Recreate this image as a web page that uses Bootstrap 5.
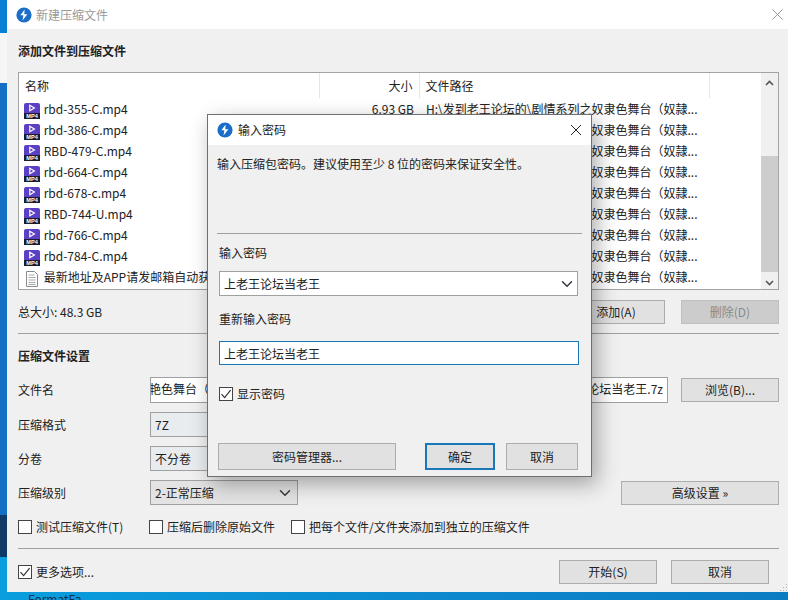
<!DOCTYPE html>
<html lang="zh"><head><meta charset="utf-8"><title>新建压缩文件</title>
<link href="https://cdn.jsdelivr.net/npm/bootstrap@5.3.0/dist/css/bootstrap.min.css" rel="stylesheet">
<style>
html,body{margin:0;height:600px;overflow:hidden}
body{font:12px/16px "Noto Sans CJK SC","Noto Sans",sans-serif;color:#222;background:#0d86cc}
.desk{width:788px;height:600px;overflow:hidden;position:relative}
.stripe{width:7px;height:592px;flex:none}
.s1{height:33px;background:#0a7fd6}.s2{height:50px;background:#f4f6f8}.s3{height:432px;background:#1470c4}.s4{height:42px;background:#0f3a66}.s5{height:35px;background:#0a9ede}
.deskfoot{height:8px;padding-left:28px;overflow:hidden;line-height:14px;font-size:12px;color:#12314a;background:linear-gradient(90deg,#0a9ede,#0c88cf 55%,#0b7cc2)}
.winmain{width:781px;height:592px;background:#f0f0f0;position:relative}
.tbar{height:29px;background:#fff;padding-left:9px;color:#999}
.tbar svg,.dlgbar svg.lg{margin-right:5px}
.xclose{margin-left:auto;margin-right:9px}
.mainbody{padding:0 9px 0 11px}
.head{font-weight:700;color:#222}
.h43{height:43px}
.listbox{height:218px;border:1px solid #a3a3a3;background:#fff;position:relative;overflow:hidden}
.ftable{table-layout:fixed;width:743px;margin:0;--bs-table-bg:transparent;border-color:transparent;font-size:12px}
.ftable th,.ftable td{padding:0;border:0;white-space:nowrap;overflow:hidden;font-weight:400;color:#222;height:21px;line-height:21px;background:transparent;box-shadow:none;vertical-align:middle}
.ftable th{height:25px;border-right:1px solid #e6e6e6;padding:0 6px}
.ftable th.blank{border:0}
.cname{padding-left:5px!important}
.cname svg{vertical-align:-5px;margin-right:1px}
.csize{text-align:right;padding-right:5px!important}
.cpath{padding-left:7px!important}
.sbar{position:absolute;top:0;right:0;width:17px;height:216px;background:#f0f0f0}
.sthumb{position:absolute;top:83px;left:0;right:0;height:116px;background:#cdcdcd}
.sbar svg{position:absolute;left:4px}
.totrow{height:43px;padding-top:10px}
.btn.wbtn{width:98px;height:24px;padding:0;font-size:12px;line-height:20px;border:1px solid #adadad;border-radius:0;background:#e1e1e1;color:#222}
.btn.wbtn.off{background:#ccc;border-color:#bfbfbf;color:#8a8a8a;opacity:1}
.wide{width:158px!important}
.rule{height:1px;background:#a0a0a0;margin:0;opacity:1;border:0}
.lab{width:132px;flex:none}
.box.form-control,.form-select.box{height:25px;min-height:0;border:1px solid #a0a0a0;border-radius:0;font-size:12px;line-height:16px;padding:3px 4px;color:#222;box-shadow:none;font-family:inherit}
.nameinp{width:518px;height:26px!important;background:#fff;flex:none;margin-right:13px;white-space:nowrap;overflow:hidden}
.nameinp .lefttx{margin-left:-6px}
.sel{width:148px;flex:none;background-color:#e3e3e3;background-position:right 6px center;background-size:12px 12px;padding-right:20px}
.row1{margin-top:9px}
.chkbox.form-check-input{width:14px;height:14px;margin:0 4px 0 0;border:1px solid #444;border-radius:0;background-color:#fff;flex:none;float:none;box-shadow:none}
.chkbox.form-check-input:checked{background-color:#fff;border-color:#444;background-size:12px 12px;background-image:url("data:image/svg+xml,%3csvg xmlns='http://www.w3.org/2000/svg' viewBox='0 0 12 12'%3e%3cpath d='M1.5 6.2 4.6 9.6 10.6 2.2' fill='none' stroke='%23333' stroke-width='1.2'/%3e%3c/svg%3e")}
.ck{margin:0;color:#222}
.chkrow{height:43px}
.c1{width:131px}.c2{width:142px}
.btmrow{height:45px;padding-right:10px;padding-top:0}
.btn.mr14{margin-right:14px}
.grip{position:absolute;right:0;bottom:0}
.dlg{position:absolute;left:200px;top:114px;width:385px;height:363px;background:#f0f0f0;border:1px solid #6f6f6f;box-shadow:5px 7px 20px rgba(0,0,0,.33);z-index:5}
.dlgbar{height:30px;background:#fff;padding-left:9px;color:#222}
.dlgbody{padding:0 9px 0 9px}
.intro{height:56px;padding-top:11px}
.dhr{margin-top:32px}
.dl{height:37px;padding-left:2px}
.dsel{width:359px;height:25px!important;margin-left:2px;background-color:#fff;background-position:right 4px center;background-size:12px 12px}
.dinp{width:360px;height:24px!important;margin-left:2px;border:1px solid #1a78b8!important;background:#fff;display:block;padding:2px 4px!important}
.dl2{height:45px;padding-left:2px}
.dlck{margin-left:2px;height:25px}
.dbtns{margin-top:37px}
.btn.dbb{height:27px;padding:0;font-size:12px;border:1px solid #adadad;border-radius:0;background:#e1e1e1;color:#222}
.pm{width:178px;margin-left:1px;margin-right:29px}
.ok{width:70px;margin-right:11px;border:2px solid #1a78b8!important}
.cc{width:72px}
</style></head><body>
<svg width="0" height="0" class="d-block" style="position:absolute" aria-hidden="true">
<symbol id="mp4" viewBox="0 0 16 16"><path d="M2 0h12a2 2 0 0 1 2 2v8H0V2a2 2 0 0 1 2-2z" fill="#5b3fc4"/><path d="M5.8 2.2v5.6l4.6-2.8z" fill="none" stroke="#fff" stroke-width="1.2"/><rect y="10" width="16" height="6" fill="#1c1c2c"/><text x="8" y="15.3" text-anchor="middle" font-size="5.6" font-weight="700" fill="#fff" font-family="Liberation Sans">MP4</text></symbol>
<symbol id="lg" viewBox="0 0 16 16"><circle cx="8" cy="8" r="7.6" fill="#1a6ec8"/><path d="M8.6 2.6 4.4 8.2h3l-.9 5.2 4.9-6.2H8.3z" fill="#fff"/></symbol>
</svg>
<div class="desk">
<div class="d-flex">
<div class="stripe d-flex flex-column"><div class="s1"></div><div class="s2"></div><div class="s3"></div><div class="s4"></div><div class="s5"></div></div>
<div class="winmain">
 <div class="tbar d-flex align-items-center"><svg width="16" height="16" class="me-1"><use href="#lg"/></svg><span>新建压缩文件</span>
  <svg class="xclose" width="11" height="11" viewBox="0 0 11 11"><path d="M.5.5l10 10M10.500.5l-10 10" stroke="#999" fill="none"/></svg></div>
 <div class="mainbody">
  <div class="head h43 d-flex align-items-center">添加文件到压缩文件</div>
  <div class="listbox">
   <table class="table ftable"><colgroup><col style="width:300px"><col style="width:100px"><col style="width:290px"><col style="width:53px"></colgroup>
   <thead><tr><th>名称</th><th class="text-end">大小</th><th>文件路径</th><th class="blank"></th></tr></thead>
   <tbody>
   <tr><td class="cname"><svg width="16" height="16"><use href="#mp4"/></svg> rbd-355-C.mp4</td><td class="csize">6.93 GB</td><td class="cpath">H:\发到老王论坛的\剧情系列之奴隶色舞台（奴隷...</td><td></td></tr>
   <tr><td class="cname"><svg width="16" height="16"><use href="#mp4"/></svg> rbd-386-C.mp4</td><td class="csize">5.87 GB</td><td class="cpath">H:\发到老王论坛的\剧情系列之奴隶色舞台（奴隷...</td><td></td></tr>
   <tr><td class="cname"><svg width="16" height="16"><use href="#mp4"/></svg> RBD-479-C.mp4</td><td class="csize">5.42 GB</td><td class="cpath">H:\发到老王论坛的\剧情系列之奴隶色舞台（奴隷...</td><td></td></tr>
   <tr><td class="cname"><svg width="16" height="16"><use href="#mp4"/></svg> rbd-664-C.mp4</td><td class="csize">5.61 GB</td><td class="cpath">H:\发到老王论坛的\剧情系列之奴隶色舞台（奴隷...</td><td></td></tr>
   <tr><td class="cname"><svg width="16" height="16"><use href="#mp4"/></svg> rbd-678-c.mp4</td><td class="csize">6.10 GB</td><td class="cpath">H:\发到老王论坛的\剧情系列之奴隶色舞台（奴隷...</td><td></td></tr>
   <tr><td class="cname"><svg width="16" height="16"><use href="#mp4"/></svg> RBD-744-U.mp4</td><td class="csize">6.02 GB</td><td class="cpath">H:\发到老王论坛的\剧情系列之奴隶色舞台（奴隷...</td><td></td></tr>
   <tr><td class="cname"><svg width="16" height="16"><use href="#mp4"/></svg> rbd-766-C.mp4</td><td class="csize">6.35 GB</td><td class="cpath">H:\发到老王论坛的\剧情系列之奴隶色舞台（奴隷...</td><td></td></tr>
   <tr><td class="cname"><svg width="16" height="16"><use href="#mp4"/></svg> rbd-784-C.mp4</td><td class="csize">6.00 GB</td><td class="cpath">H:\发到老王论坛的\剧情系列之奴隶色舞台（奴隷...</td><td></td></tr>
   <tr><td class="cname"><svg width="16" height="16" viewBox="0 0 16 16"><path d="M2.500 .5h8l3 3v12h-11z" fill="#fff" stroke="#8a8a8a"/><path d="M4.500 4h6M4.500 6.500h7M4.500 9h7M4.500 11.500h7M4.500 13.500h7" stroke="#a8a8a8"/></svg> 最新地址及APP请发邮箱自动获取.txt</td><td class="csize">1 KB</td><td class="cpath">H:\发到老王论坛的\剧情系列之奴隶色舞台（奴隷...</td><td></td></tr>
   </tbody></table>
   <div class="sbar"><svg style="top:7px" width="9" height="6" viewBox="0 0 9 6"><path d="M1 5l3.500-3.500L8 5" fill="none" stroke="#555" stroke-width="1.600"/></svg><div class="sthumb"></div><svg style="top:207px" width="9" height="6" viewBox="0 0 9 6"><path d="M1 1l3.500 3.500L8 1" fill="none" stroke="#555" stroke-width="1.600"/></svg></div>
  </div>
  <div class="totrow d-flex align-items-start"><span class="me-auto mt-1">总大小: 48.3 GB</span><button class="btn wbtn" type="button">添加(A)</button><button class="btn wbtn off ms-3 ms-14" type="button" disabled>删除(D)</button></div>
  <hr class="rule">
  <div class="head h43 d-flex align-items-center">压缩文件设置</div>
  <div class="d-flex align-items-center"><span class="lab">文件名</span><div class="form-control box nameinp d-flex justify-content-between"><span class="lefttx">艳色舞台（奴隶）</span><span>上老王论坛当老王.7z</span></div><button class="btn wbtn" type="button">浏览(B)...</button></div>
  <div class="d-flex align-items-center row1"><span class="lab">压缩格式</span><select class="form-select box sel" disabled><option>7Z</option></select></div>
  <div class="d-flex align-items-center row1"><span class="lab">分卷</span><select class="form-select box sel" disabled><option>不分卷</option></select></div>
  <div class="d-flex align-items-center row1"><span class="lab">压缩级别</span><select class="form-select box sel"><option>2-正常压缩</option></select><button class="btn wbtn wide ms-auto" type="button">高级设置 »</button></div>
  <div class="chkrow d-flex align-items-center">
   <label class="ck d-flex align-items-center c1"><input class="form-check-input chkbox" type="checkbox">测试压缩文件(T)</label>
   <label class="ck d-flex align-items-center c2"><input class="form-check-input chkbox" type="checkbox">压缩后删除原始文件</label>
   <label class="ck d-flex align-items-center"><input class="form-check-input chkbox" type="checkbox">把每个文件/文件夹添加到独立的压缩文件</label>
  </div>
  <hr class="rule">
  <div class="btmrow d-flex align-items-center"><label class="ck d-flex align-items-center me-auto"><input class="form-check-input chkbox" type="checkbox" checked>更多选项...</label><button class="btn wbtn mr14" type="button">开始(S)</button><button class="btn wbtn" type="button">取消</button></div>
 </div>
 <svg class="grip" width="9" height="9" viewBox="0 0 9 9"><path d="M7 1h1v1H7zM4 4h1v1H4zM7 4h1v1H7zM1 7h1v1H1zM4 7h1v1H4zM7 7h1v1H7z" fill="#b5b5b5"/></svg>
 <div class="dlg" role="dialog">
  <div class="dlgbar d-flex align-items-center"><svg class="lg" width="16" height="16"><use href="#lg"/></svg><span>输入密码</span><svg class="xclose" width="12" height="12" viewBox="0 0 12 12"><path d="M1 1l10 10M11 1 1 11" stroke="#222" fill="none"/></svg></div>
  <div class="dlgbody">
   <div class="intro">输入压缩包密码。建议使用至少 8 位的密码来保证安全性。</div>
   <hr class="rule dhr">
   <div class="dl d-flex align-items-center">输入密码</div>
   <select class="form-select box dsel"><option>上老王论坛当老王</option></select>
   <div class="dl2 d-flex align-items-center">重新输入密码</div>
   <input class="form-control box dinp" type="text" value="上老王论坛当老王">
   <label class="ck dlck d-flex align-items-center mt-3"><input class="form-check-input chkbox" type="checkbox" checked>显示密码</label>
   <div class="dbtns d-flex"><button class="btn dbb pm" type="button">密码管理器...</button><button class="btn dbb ok" type="button">确定</button><button class="btn dbb cc" type="button">取消</button></div>
  </div>
 </div>
</div>
</div>
<div class="deskfoot">FormatFa</div>
</div>
</body></html>
